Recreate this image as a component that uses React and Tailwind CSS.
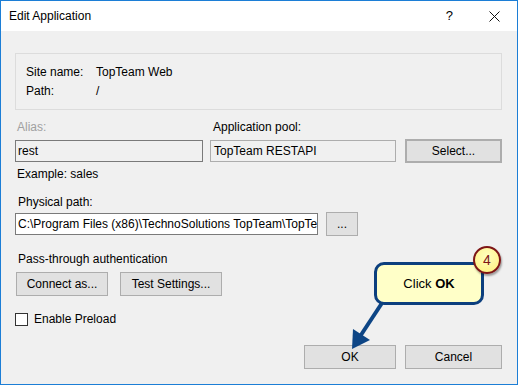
import React from 'react';

function Btn({ children, className = '' }) {
  return (
    <div className={`h-[24px] flex items-center justify-center bg-[#e1e1e1] border border-[#adadad] ${className}`}>
      {children}
    </div>
  );
}

export default function App() {
  return (
    <div
      className="relative w-[518px] h-[385px] border border-[#1c7ed6] bg-[#f0f0f0] flex flex-col text-[12px] text-black leading-[16px] overflow-hidden"
      style={{ fontFamily: '"Liberation Sans", Arial, sans-serif' }}
    >
      {/* title bar */}
      <div className="h-[30px] bg-white flex items-center pl-[8px] pr-[16px]">
        <span className="flex-1">Edit Application</span>
        <span className="text-[13px] mr-[36px]">?</span>
        <svg width="11" height="11" viewBox="0 0 11 11" className="mr-[1px]">
          <path d="M0.5 0.5 L10.5 10.5 M10.5 0.5 L0.5 10.5" stroke="#111" strokeWidth="1" />
        </svg>
      </div>

      <div className="flex-1 flex flex-col px-[14px] pt-[22px] pb-[15px]">
        {/* site info */}
        <div className="w-[487px] h-[57px] border border-[#dcdcdc] pl-[10px] pt-[9px]">
          <div className="grid grid-cols-[70px_1fr] leading-[19px]">
            <span>Site name:</span>
            <span>TopTeam Web</span>
            <span>Path:</span>
            <span>/</span>
          </div>
        </div>

        {/* alias / pool */}
        <div className="flex mt-[9px]">
          <div className="w-[188px] pl-[2px] text-[#a0a0a0]">Alias:</div>
          <div className="ml-[7px] pl-[3px]">Application pool:</div>
        </div>
        <div className="flex items-center mt-[4px]">
          <div className="w-[188px] h-[22px] border border-[#7a7a7a] flex items-center px-[2px]">rest</div>
          <div className="w-[186px] h-[22px] ml-[7px] border border-[#adadad] flex items-center px-[3px]">TopTeam RESTAPI</div>
          <Btn className="w-[97px] ml-[9px] border-2 border-[#0078d7]">Select...</Btn>
        </div>
        <div className="mt-[3px] pl-[2px]">Example: sales</div>

        {/* physical path */}
        <div className="mt-[12px] pl-[3px]">Physical path:</div>
        <div className="flex items-center mt-[2px]">
          <div className="w-[303px] h-[22px] bg-white border border-[#7a7a7a] flex items-center px-[2px] overflow-hidden whitespace-nowrap">
            C:\Program Files (x86)\TechnoSolutions TopTeam\TopTe
          </div>
          <Btn className="w-[32px] ml-[8px]">...</Btn>
        </div>

        {/* auth */}
        <div className="mt-[15px] pl-[3px]">Pass-through authentication</div>
        <div className="flex mt-[5px] pl-[1px]">
          <Btn className="w-[92px]">Connect as...</Btn>
          <Btn className="w-[102px] ml-[12px]">Test Settings...</Btn>
        </div>

        <div className="flex items-center mt-[15px]">
          <div className="w-[13px] h-[13px] bg-white border border-[#333]" />
          <span className="ml-[6px]">Enable Preload</span>
        </div>

        <div className="mt-auto flex justify-end pr-[1px]">
          <Btn className="w-[92px]">OK</Btn>
          <Btn className="w-[97px] ml-[9px]">Cancel</Btn>
        </div>
      </div>

      {/* callout overlay */}
      <svg className="absolute left-0 top-0 pointer-events-none" width="518" height="385">
        <line x1="381" y1="302" x2="358" y2="337" stroke="#0d4585" strokeWidth="4" />
        <polygon points="351,348 352,328 369,339" fill="#0d4585" />
      </svg>
      <div className="absolute left-[373px] top-[261px] w-[110px] h-[43px] rounded-[10px] border-[3px] border-[#0c3f7e] bg-[#ffffc8] flex items-center justify-center text-[13px]">
        <span>Click <b>OK</b></span>
      </div>
      <div
        className="absolute left-[472px] top-[245px] w-[28px] h-[28px] rounded-full border-2 border-[#7e1616] flex items-center justify-center text-[14px] text-[#7e1616] shadow-[1px_2px_2px_rgba(0,0,0,0.35)]"
        style={{ background: 'radial-gradient(circle at 50% 35%, #ffffc0, #fff07a)' }}
      >
        4
      </div>
    </div>
  );
}
